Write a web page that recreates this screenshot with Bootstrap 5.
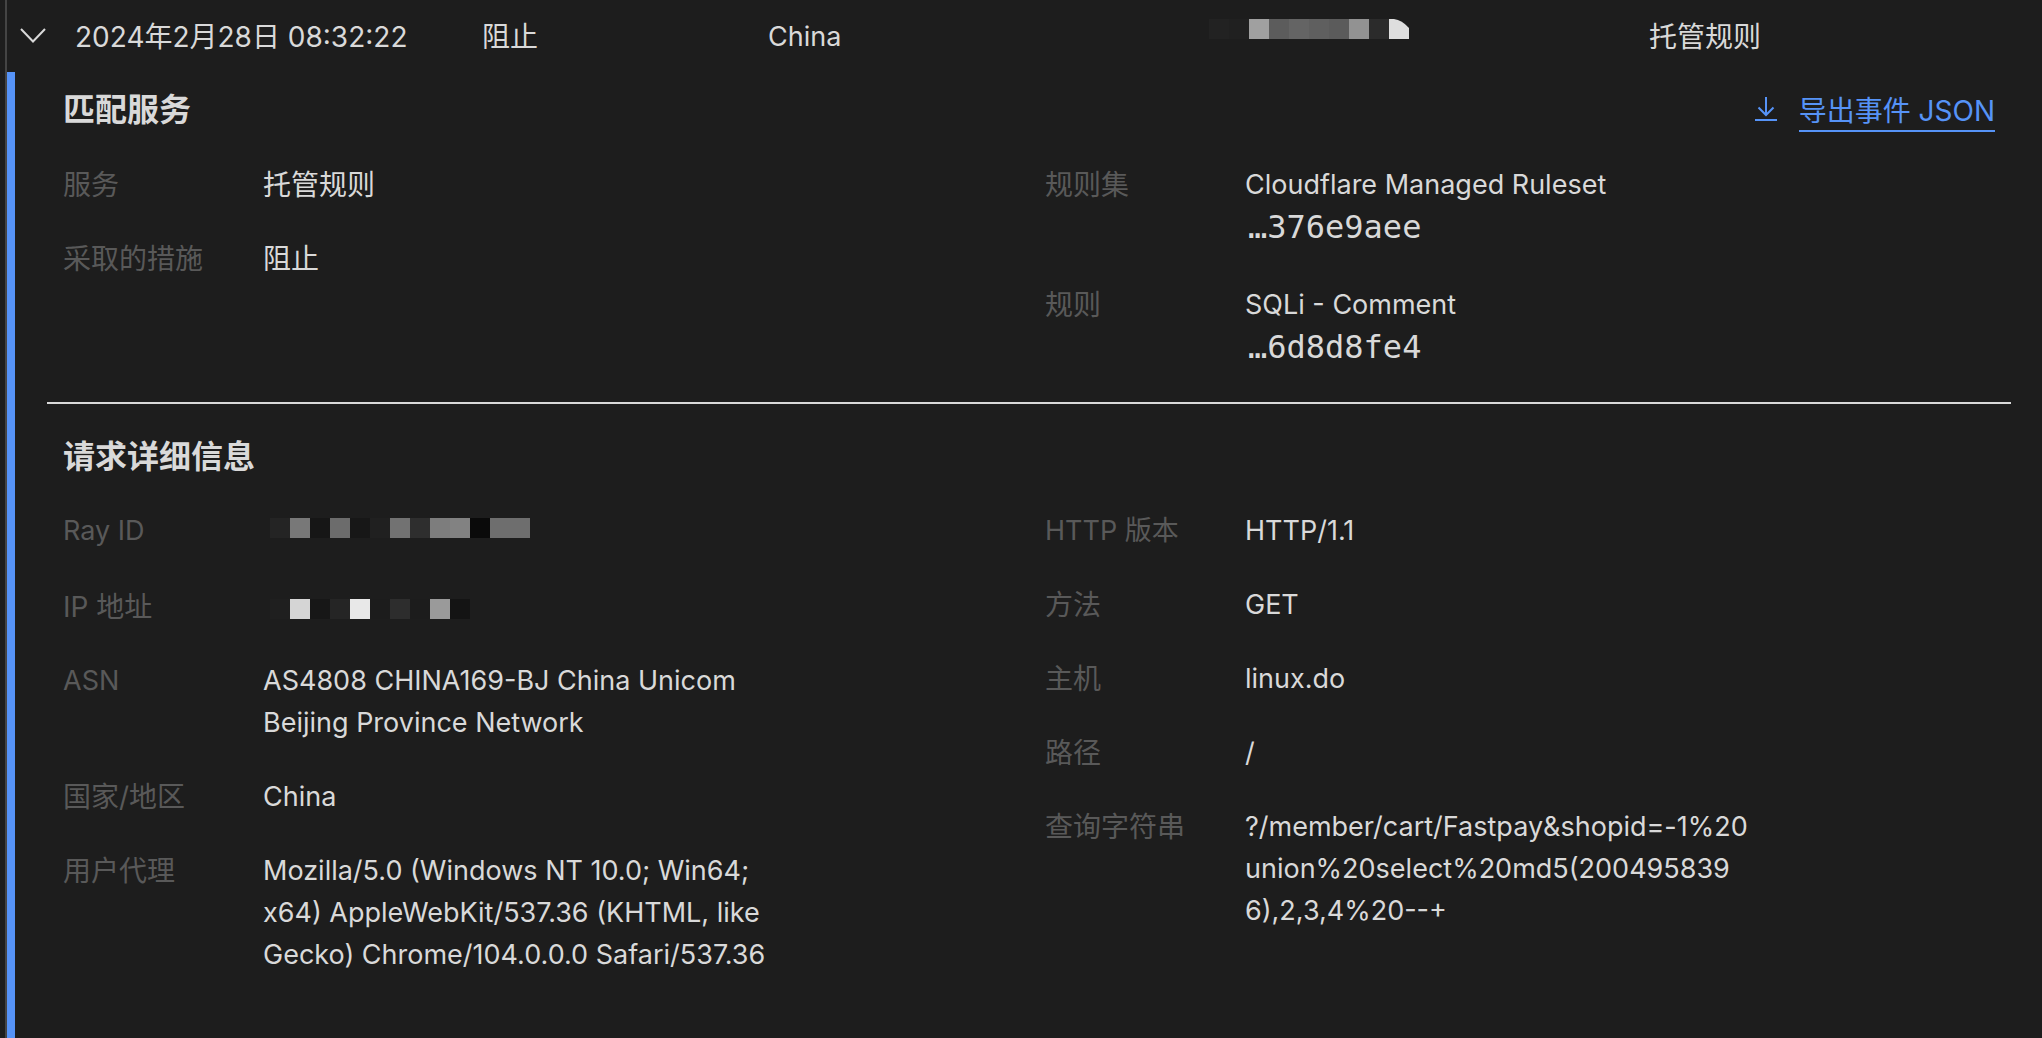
<!DOCTYPE html>
<html lang="zh-CN">
<head>
<meta charset="utf-8">
<meta name="viewport" content="width=device-width, initial-scale=1">
<title>安全事件</title>
<link href="https://cdn.jsdelivr.net/npm/bootstrap@5.3.0/dist/css/bootstrap.min.css" rel="stylesheet">
<style>
  :root { --ink: #d9d9d9; --muted: #595959; --accent: #5693f7; --surface: #1d1d1d; }
  body {
    background: var(--surface); color: var(--ink);
    font-family: Inter, "Noto Sans CJK SC", sans-serif;
    font-size: 27px; line-height: 42px;
  }
  .cjk { font-size: 28px; }
  .event { margin-left: 5px; border-left: 2px solid #444; }
  .event-summary {
    display: grid; align-items: center; height: 72px; padding-top: 2px;
    grid-template-columns: 68px 407fr 286fr 441fr 440fr 393fr;
  }
  .toggle { color: var(--ink); padding-left: 13px; }
  .event-panel { border-left: 8px solid var(--accent); padding: 0 31px 0 32px; }
  .section-head { padding: 16px 16px 0; }
  .section-head h2 { font-size: 32px; line-height: 42px; font-weight: 700; }
  .section-rule { border-top: 2px solid var(--ink); }
  .details { padding: 0 16px; }
  .details dt { width: 200px; font-weight: 400; color: var(--muted); }
  .details dd { max-width: 530px; }
  .pair { margin-bottom: 32px; min-height: 42px; }
  .pair-id { min-height: 44px; }
  .pair-hash { margin-bottom: 36px; }
  .pair-hash:last-child { margin-bottom: 34px; }
  .hash-id {
    font-family: "DejaVu Sans Mono", monospace; font-size: 32px; color: var(--ink);
    padding-left: 3px;
  }
  .mosaic { padding-left: 7px; }
  .export { color: var(--accent); }
  .export-text { border-bottom: 2px solid var(--accent); line-height: 38px; padding-top: 4px; }
  .export-icon { margin-right: 20px; }
  .export:hover { color: #8bb6ff; }
</style>
</head>
<body>
<main class="event min-vh-100 d-flex flex-column">
  <div class="event-summary">
    <button type="button" class="toggle btn btn-link border-0 py-0 d-flex" aria-label="收起" aria-expanded="true" aria-controls="panel">
      <svg width="26" height="18" viewBox="0 0 26 18" fill="none" stroke="currentColor" stroke-width="2"><path d="M1 1l12 12.500L25 1"/></svg>
    </button>
    <div class="cjk">2024年2月28日 08:32:22</div>
    <div class="cjk">阻止</div>
    <div>China</div>
    <div class="d-flex pb-3">
      <svg width="200" height="20" shape-rendering="crispEdges" role="img" aria-label="已打码">
        <path fill="#222" d="M0 0h20v20H0z"/><path fill="#202020" d="M20 0h20v20H20z"/><path fill="#a0a0a0" d="M40 0h20v20H40z"/><path fill="#5c5c5c" d="M60 0h20v20H60z"/><path fill="#646464" d="M80 0h20v20H80z"/><path fill="#5f5f5f" d="M100 0h20v20h-20z"/><path fill="#5b5b5b" d="M120 0h20v20h-20z"/><path fill="#929292" d="M140 0h20v20h-20z"/><path fill="#2b2b2b" d="M160 0h20v20h-20z"/><path fill="#dedede" shape-rendering="auto" d="M180 0h5q8 1 15 9v11h-20z"/>
      </svg>
    </div>
    <div class="cjk">托管规则</div>
  </div>

  <div class="event-panel flex-grow-1" id="panel">
    <section>
      <div class="section-head d-flex justify-content-between align-items-center pb-4 mb-2">
        <h2 class="mb-0">匹配服务</h2>
        <a href="#" class="export d-flex align-items-center text-decoration-none cjk">
          <svg class="export-icon" width="26" height="26" viewBox="0 0 26 26" fill="none" stroke="currentColor" stroke-width="2"><path d="M13 0v18M5.500 10.500L13 18l7.500-7.500M2 23h22"/></svg>
          <span class="export-text">导出事件 JSON</span>
        </a>
      </div>
      <div class="row g-0">
        <dl class="details col-6 mb-0">
          <div class="pair d-flex"><dt class="cjk flex-shrink-0">服务</dt><dd class="cjk mb-0">托管规则</dd></div>
          <div class="pair d-flex"><dt class="cjk flex-shrink-0">采取的措施</dt><dd class="cjk mb-0">阻止</dd></div>
        </dl>
        <dl class="details col-6 mb-0">
          <div class="pair pair-hash d-flex"><dt class="cjk flex-shrink-0">规则集</dt><dd class="mb-0">Cloudflare Managed Ruleset<code class="hash-id d-block">…376e9aee</code></dd></div>
          <div class="pair pair-hash d-flex"><dt class="cjk flex-shrink-0">规则</dt><dd class="mb-0">SQLi - Comment<code class="hash-id d-block">…6d8d8fe4</code></dd></div>
        </dl>
      </div>
    </section>

    <section class="section-rule">
      <div class="section-head pt-3 mt-3 pb-4 mb-2"><h2 class="mb-0">请求详细信息</h2></div>
      <div class="row g-0">
        <dl class="details col-6 mb-0">
          <div class="pair pair-id d-flex"><dt class="flex-shrink-0">Ray ID</dt><dd class="mosaic mb-0 pt-2 d-flex align-items-start">
            <svg width="260" height="20" shape-rendering="crispEdges" role="img" aria-label="已打码"><path fill="#242424" d="M0 0h20v20H0z"/><path fill="#787878" d="M20 0h20v20H20z"/><path fill="#161616" d="M40 0h20v20H40z"/><path fill="#6c6c6c" d="M60 0h20v20H60z"/><path fill="#171717" d="M80 0h20v20H80z"/><path fill="#202020" d="M100 0h20v20h-20z"/><path fill="#727272" d="M120 0h20v20h-20z"/><path fill="#2e2e2e" d="M140 0h20v20h-20z"/><path fill="#7d7d7d" d="M160 0h20v20h-20z"/><path fill="#828282" d="M180 0h20v20h-20z"/><path fill="#0a0a0a" d="M200 0h20v20h-20z"/><path fill="#6e6e6e" d="M220 0h40v20h-40z"/></svg>
          </dd></div>
          <div class="pair d-flex"><dt class="cjk flex-shrink-0">IP 地址</dt><dd class="mosaic mb-0 pt-1 d-flex align-items-center">
            <svg width="200" height="20" shape-rendering="crispEdges" role="img" aria-label="已打码"><path fill="#1f1f1f" d="M0 0h20v20H0z"/><path fill="#d5d5d5" d="M20 0h20v20H20z"/><path fill="#171717" d="M40 0h20v20H40z"/><path fill="#252525" d="M60 0h20v20H60z"/><path fill="#e8e8e8" d="M80 0h20v20H80z"/><path fill="#1c1c1c" d="M100 0h20v20h-20z"/><path fill="#2d2d2d" d="M120 0h20v20h-20z"/><path fill="#1c1c1c" d="M140 0h20v20h-20z"/><path fill="#9a9a9a" d="M160 0h20v20h-20z"/><path fill="#141414" d="M180 0h20v20h-20z"/></svg>
          </dd></div>
          <div class="pair d-flex"><dt class="flex-shrink-0">ASN</dt><dd class="mb-0">AS4808 CHINA169-BJ China Unicom Beijing Province Network</dd></div>
          <div class="pair d-flex"><dt class="cjk flex-shrink-0">国家/地区</dt><dd class="mb-0">China</dd></div>
          <div class="pair d-flex"><dt class="cjk flex-shrink-0">用户代理</dt><dd class="mb-0">Mozilla/5.0 (Windows NT 10.0; Win64; x64) AppleWebKit/537.36 (KHTML, like Gecko) Chrome/104.0.0.0 Safari/537.36</dd></div>
        </dl>
        <dl class="details col-6 mb-0">
          <div class="pair d-flex"><dt class="flex-shrink-0">HTTP 版本</dt><dd class="mb-0">HTTP/1.1</dd></div>
          <div class="pair d-flex"><dt class="cjk flex-shrink-0">方法</dt><dd class="mb-0">GET</dd></div>
          <div class="pair d-flex"><dt class="cjk flex-shrink-0">主机</dt><dd class="mb-0">linux.do</dd></div>
          <div class="pair d-flex"><dt class="cjk flex-shrink-0">路径</dt><dd class="mb-0">/</dd></div>
          <div class="pair d-flex"><dt class="cjk flex-shrink-0">查询字符串</dt><dd class="mb-0">?/member/cart/Fastpay&amp;shopid=-1%20<br>union%20select%20md5(200495839<br>6),2,3,4%20--+</dd></div>
        </dl>
      </div>
    </section>
  </div>
</main>
<script src="https://cdn.jsdelivr.net/npm/bootstrap@5.3.0/dist/js/bootstrap.bundle.min.js"></script>
</body>
</html>
